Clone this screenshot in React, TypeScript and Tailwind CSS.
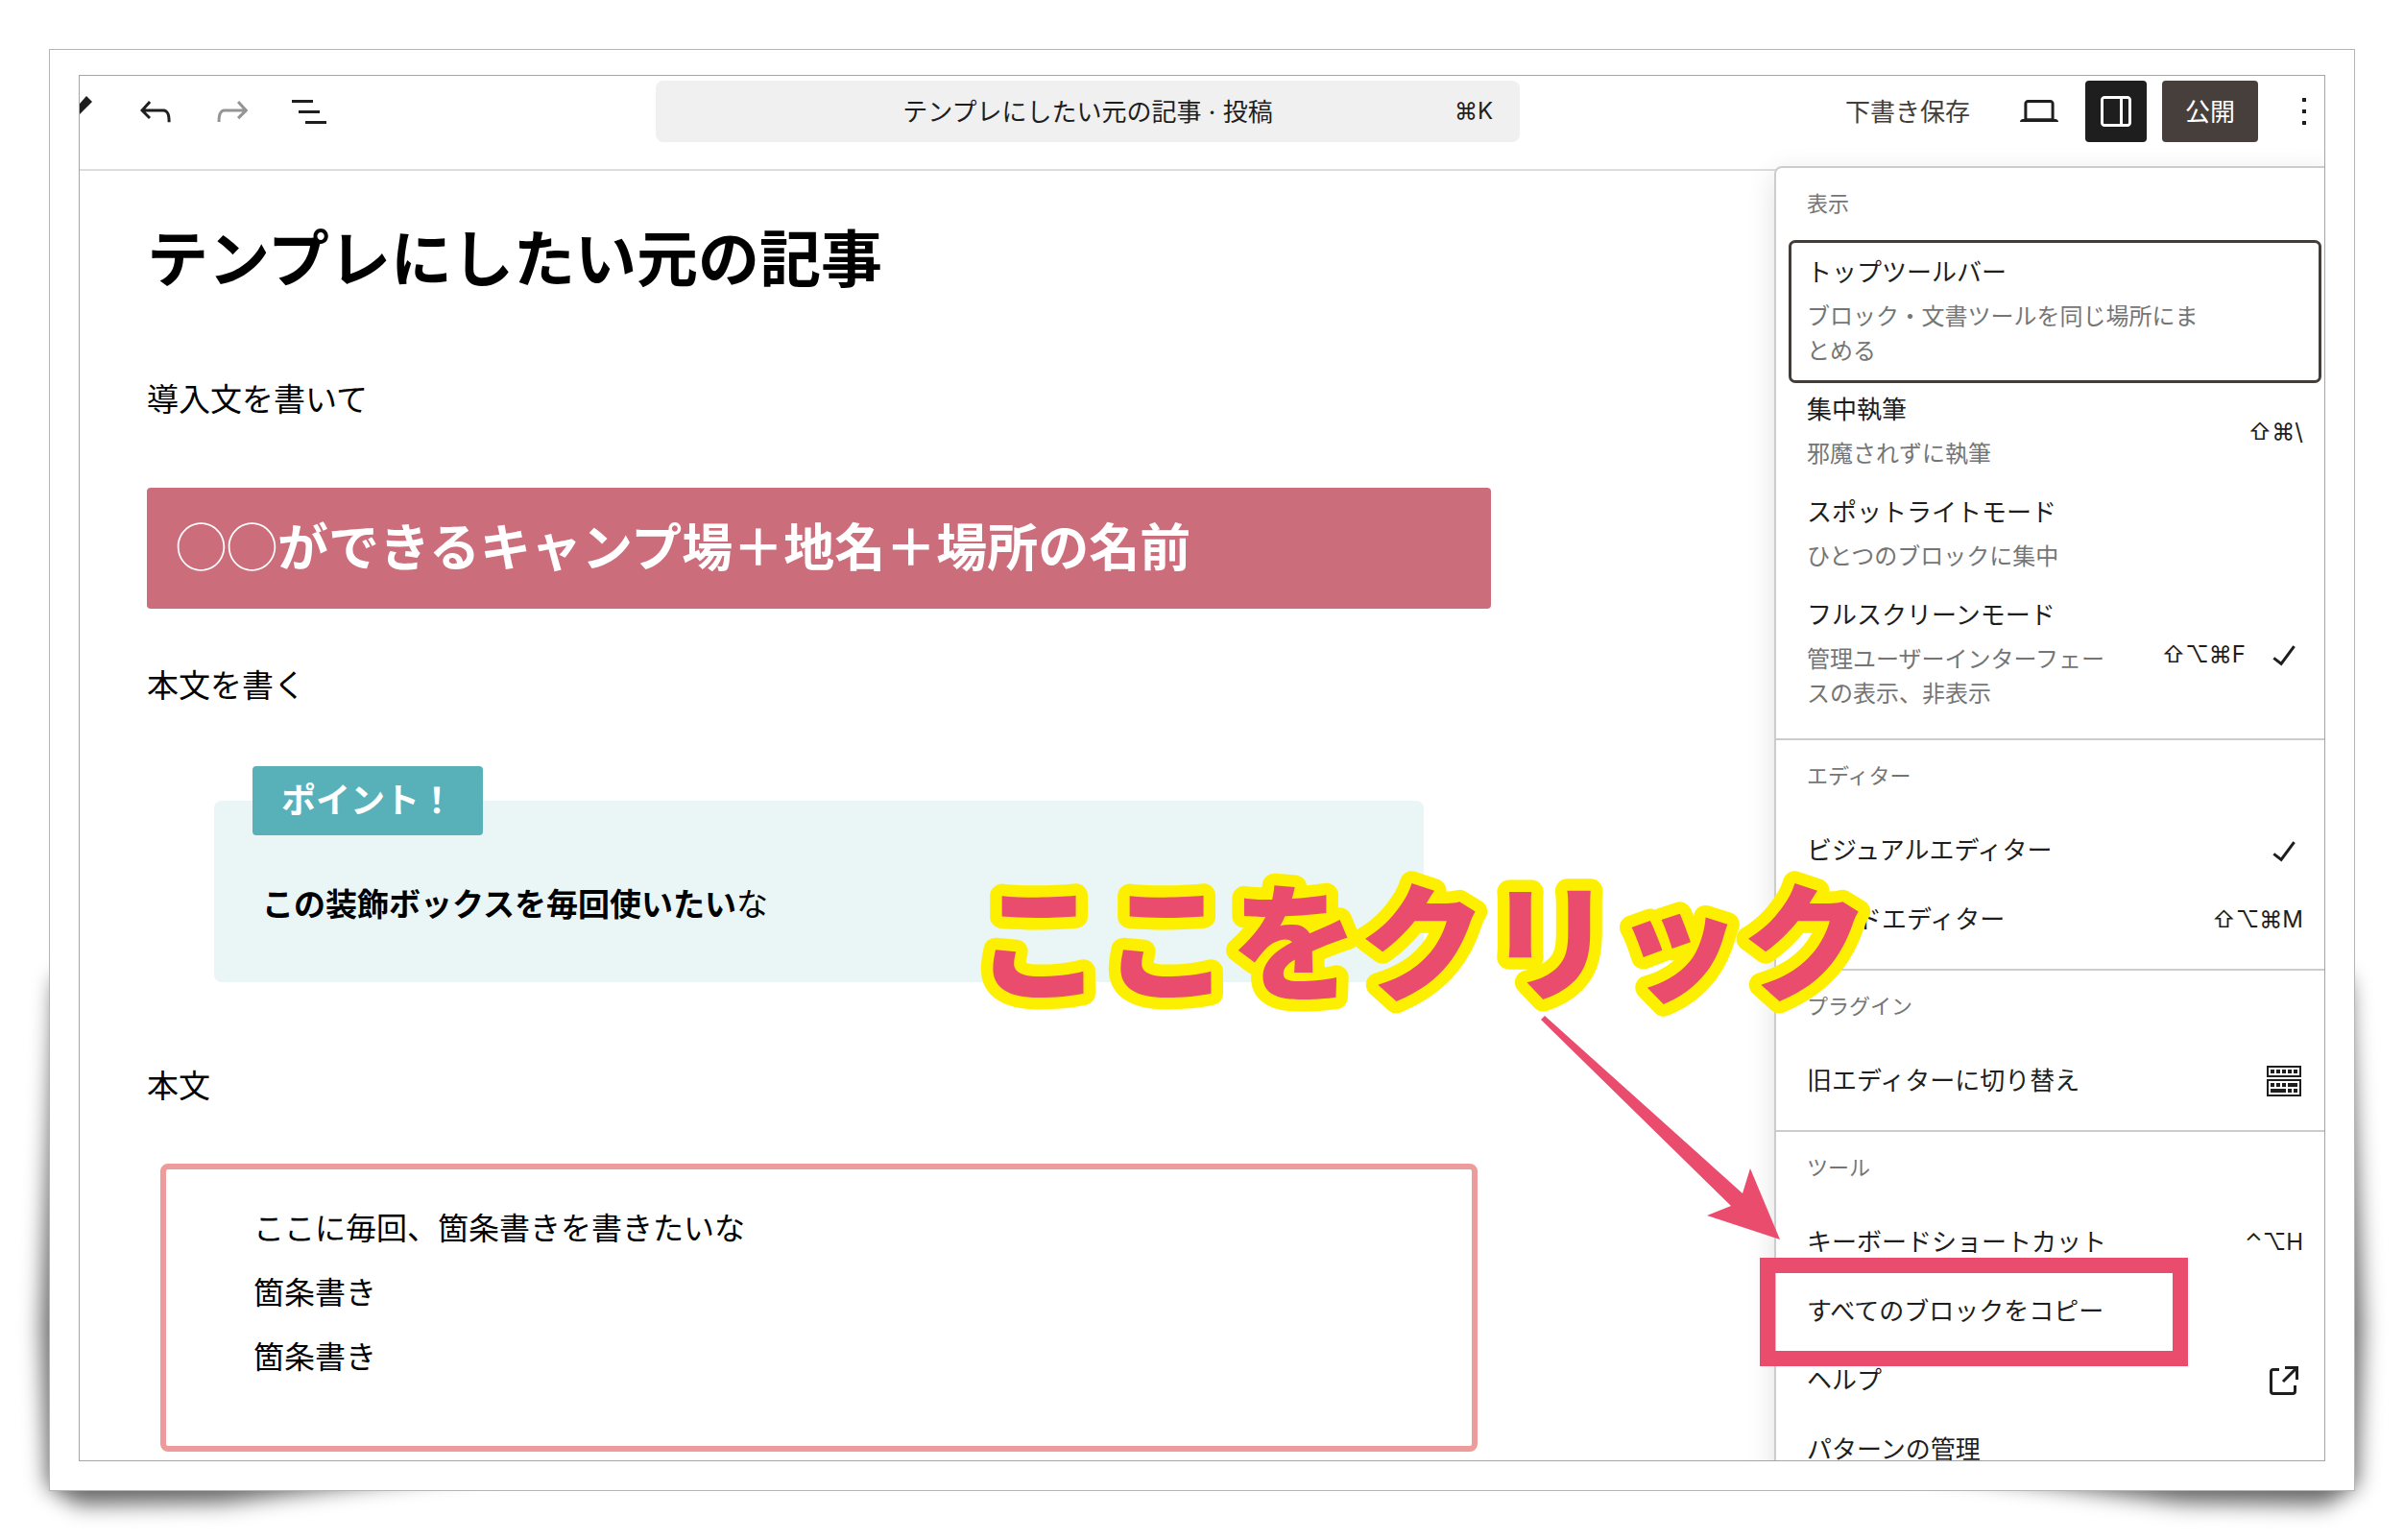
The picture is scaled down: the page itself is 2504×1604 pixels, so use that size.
import type { ReactNode } from "react";
import clsx from "clsx";

type MenuItem = {
  label: string;
  info?: string;
  shortcut?: string;
  icon?: ReactNode;
  href?: string;
  focused?: boolean;
};

type MenuGroup = {
  label: string;
  items: MenuItem[];
};

function Icon({ d, className }: { d: string; className?: string }) {
  return (
    <svg viewBox="0 0 24 24" fill="currentColor" aria-hidden="true" className={clsx("size-12 shrink-0", className)}>
      <path d={d} />
    </svg>
  );
}

const paths = {
  undo: "M18.3 11.7c-.6-.6-1.4-.9-2.3-.9H6.7l2.9-3.3-1.1-1-4.5 5L8.5 16l1-1-2.7-2.7H16c.5 0 .9.2 1.3.5 1 1 1 3.4 1 4.5v.3h1.5v-.2c0-1.5 0-4.3-1.5-5.7z",
  redo: "M15.6 6.5l-1.1 1 2.9 3.3H8c-.9 0-1.7.3-2.3.9-1.4 1.5-1.4 4.2-1.4 5.6v.2h1.5v-.3c0-1.1 0-3.5 1-4.5.3-.3.7-.5 1.3-.5h9.2L14.5 15l1.1 1.1 4.6-4.6-4.6-5z",
  listView: "M3 6h11v1.5H3V6Zm3.5 5.5h11V13h-11v-1.5ZM21 17H10v1.5h11V17Z",
  desktop:
    "M20.5 16h-.7V8c0-1.1-.9-2-2-2H6.2c-1.1 0-2 .9-2 2v8h-.7c-.8 0-1.5.7-1.5 1.5h20c0-.8-.7-1.5-1.5-1.5zM5.7 8c0-.3.2-.5.5-.5h11.6c.3 0 .5.2.5.5v7.6H5.7V8z",
  sidebar:
    "M18 4H6c-1.1 0-2 .9-2 2v12c0 1.1.9 2 2 2h12c1.1 0 2-.9 2-2V6c0-1.1-.9-2-2-2zm-4 14.5H6c-.3 0-.5-.2-.5-.5V6c0-.3.2-.5.5-.5h8v13zm4.5-.5c0 .3-.2.5-.5.5h-2.5v-13H18c.3 0 .5.2.5.5v12z",
  more: "M13 19h-2v-2h2v2zm0-6h-2v-2h2v2zm0-6h-2V5h2v2z",
  check: "M16.7 7.1l-6.3 8.5-3.3-2.5-.9 1.2 4.5 3.4L17.9 8z",
  external:
    "M19.5 4.5h-7V6h4.44l-5.97 5.97 1.06 1.06L18 7.06v4.44h1.5v-7Zm-13 1a2 2 0 0 0-2 2v10a2 2 0 0 0 2 2h10a2 2 0 0 0 2-2v-3H17v3a.5.5 0 0 1-.5.5h-10a.5.5 0 0 1-.5-.5v-10a.5.5 0 0 1 .5-.5h3V5.5h-3Z",
};

function KeyboardIcon() {
  return (
    <svg viewBox="0 0 48 48" fill="currentColor" aria-hidden="true" className="size-12 shrink-0">
      <g fill="none" stroke="currentColor" strokeWidth="2">
        <rect x="7" y="9" width="34" height="10" />
        <rect x="7" y="23" width="34" height="16" />
      </g>
      <path d="M10 12h4v4h-4zM16 12h4v4h-4zM22 12h4v4h-4zM28 12h4v4h-4zM34 12h4v4h-4z" />
      <path d="M10 26h4v4h-4zM16 26h4v4h-4zM22 26h4v4h-4zM28 26h10v4H28z" />
      <path d="M10 32h16v4H10zM28 32h4v4h-4zM34 32h4v4h-4z" />
    </svg>
  );
}

const groups: MenuGroup[] = [
  {
    label: "表示",
    items: [
      { label: "トップツールバー", info: "ブロック・文書ツールを同じ場所にまとめる", focused: true },
      { label: "集中執筆", info: "邪魔されずに執筆", shortcut: "⇧⌘\\" },
      { label: "スポットライトモード", info: "ひとつのブロックに集中" },
      {
        label: "フルスクリーンモード",
        info: "管理ユーザーインターフェースの表示、非表示",
        shortcut: "⇧⌥⌘F",
        icon: <Icon d={paths.check} />,
      },
    ],
  },
  {
    label: "エディター",
    items: [
      { label: "ビジュアルエディター", icon: <Icon d={paths.check} /> },
      { label: "コードエディター", shortcut: "⇧⌥⌘M" },
    ],
  },
  {
    label: "プラグイン",
    items: [{ label: "旧エディターに切り替え", icon: <KeyboardIcon /> }],
  },
  {
    label: "ツール",
    items: [
      { label: "キーボードショートカット", shortcut: "⌃⌥H" },
      { label: "すべてのブロックをコピー" },
      { label: "ヘルプ", icon: <Icon d={paths.external} />, href: "#help" },
      { label: "パターンの管理", href: "#patterns" },
    ],
  },
];

function MenuRow({ item }: { item: MenuItem }) {
  const className = clsx(
    "flex w-full items-center gap-4 rounded-sm px-4 text-left text-[#1e1e1e]",
    item.info ? "py-3" : "h-[72px] pt-0.5",
    item.focused && "ring-3 ring-[#433d39]"
  );
  const content = (
    <>
      <span className="flex-1">
        <span className="block text-[26px] leading-[38px]">{item.label}</span>
        {item.info && (
          <span
            className={clsx(
              "mt-[9px] block text-2xl leading-9 text-[#757575]",
              item.icon ? "max-w-[312px]" : "max-w-[416px]"
            )}
          >
            {item.info}
          </span>
        )}
      </span>
      {item.shortcut && <kbd className="font-[inherit] text-2xl">{item.shortcut}</kbd>}
      {item.icon && <span className="-mr-1">{item.icon}</span>}
    </>
  );

  return item.href ? (
    <a href={item.href} role="menuitem" className={className}>
      {content}
    </a>
  ) : (
    <button type="button" role="menuitem" className={className}>
      {content}
    </button>
  );
}

function OptionsMenu() {
  return (
    <div
      role="menu"
      className="absolute top-[94px] -right-2.5 w-[583px] rounded-lg border-2 border-[#ccc] bg-white shadow-[0_8px_30px_rgba(0,0,0,0.12)]"
    >
      {groups.map((group, i) => (
        <div
          key={group.label}
          role="group"
          aria-label={group.label}
          className={clsx("pr-3.5 pb-4 pl-4", i > 0 && "border-t-2 border-[#ccc]")}
        >
          <div className="px-4 pt-3.5 pb-[18px] text-[22px] leading-[46px] text-[#757575]">{group.label}</div>
          {group.items.map((item) => (
            <MenuRow key={item.label} item={item} />
          ))}
        </div>
      ))}
    </div>
  );
}

function Toolbar() {
  const toolButton = "flex size-16 items-center justify-center";
  return (
    <header className="flex items-start justify-between border-b-2 border-[#ddd] pt-[5px] pb-7 text-[#1e1e1e]">
      <div className="mr-3.5 flex gap-4">
        <button type="button" aria-label="ツール" className="flex h-16 w-[31px] items-center">
          <svg viewBox="0 0 13 32" fill="currentColor" className="h-8 w-[13px]">
            <path d="M7 0 13 6 0 19V8Z" />
          </svg>
        </button>
        <button type="button" aria-label="元に戻す" className={toolButton}>
          <Icon d={paths.undo} />
        </button>
        <button type="button" aria-label="やり直す" className={clsx(toolButton, "text-[#949494]")}>
          <Icon d={paths.redo} />
        </button>
        <button type="button" aria-label="ドキュメント概観" className={toolButton}>
          <Icon d={paths.listView} />
        </button>
      </div>

      <button type="button" className="flex h-16 w-[900px] items-center rounded-lg bg-[#f0f0f0] px-7">
        <span className="w-10" />
        <span className="flex-1 text-center text-[26px]">テンプレにしたい元の記事 · 投稿</span>
        <kbd className="w-10 text-right font-[inherit] text-2xl">⌘K</kbd>
      </button>

      <div className="-mr-[11px] flex gap-4">
        <button type="button" className="h-16 px-6 text-[26px] text-[#433d39]">
          下書き保存
        </button>
        <button type="button" aria-label="表示" className={toolButton}>
          <Icon d={paths.desktop} />
        </button>
        <button type="button" aria-label="設定" className={clsx(toolButton, "rounded-sm bg-[#1e1e1e] text-white")}>
          <Icon d={paths.sidebar} />
        </button>
        <button type="button" className="h-16 rounded-sm bg-[#473f3b] px-6 text-[26px] text-white">
          公開
        </button>
        <button type="button" aria-label="オプション" className={toolButton}>
          <Icon d={paths.more} />
        </button>
      </div>
    </header>
  );
}

function Article() {
  return (
    <article className="ml-[70px] max-w-[1400px] pt-11 pb-[9px] text-[33px] leading-[60px] text-black">
      <h1 className="text-[64px] leading-24 font-bold">テンプレにしたい元の記事</h1>
      <p className="mt-[68px]">導入文を書いて</p>
      <h2 className="mt-[62px] rounded-sm bg-[#cb6d7b] px-[30px] py-[15px] text-[53px] leading-24 font-bold text-white">
        <span className="font-['Noto_Sans_CJK_JP',sans-serif] leading-none font-normal">◯◯</span>
        ができるキャンプ場＋地名＋場所の名前
      </h2>
      <p className="mt-[50px]">本文を書く</p>

      <section className="relative mx-[70px] mt-[90px] rounded-lg bg-[#eaf5f5] px-[50px] pt-[78px] pb-[51px]">
        <div className="absolute -top-9 left-10 rounded-sm bg-[#58b1b9] px-[30px] text-4xl leading-[72px] font-bold text-white">
          ポイント！
        </div>
        <p>
          <strong className="font-bold">この装飾ボックスを毎回使いたい</strong>な
        </p>
      </section>

      <p className="mt-[78px]">本文</p>
      <ul className="mx-3.5 mt-[51px] rounded-lg border-6 border-[#ed9b9b] pt-7 pb-[59px] pl-[91px] text-[32px] leading-[67px]">
        <li>ここに毎回、箇条書きを書きたいな</li>
        <li>箇条書き</li>
        <li>箇条書き</li>
      </ul>
    </article>
  );
}

function Callout() {
  return (
    <div className="pointer-events-none absolute inset-0">
      <svg viewBox="0 0 960 420" fill="#ea4c6d" className="absolute top-[801px] right-[461px] h-[420px] w-[960px]">
        <path d="M605 182 609 178 815 363 823 337 854 411 778 386 803 376Z" />
        <text
          x="16"
          y="152"
          stroke="#fcf000"
          strokeWidth="25"
          strokeLinejoin="round"
          paintOrder="stroke"
          className="text-[133px] font-black"
        >
          ここをクリック
        </text>
      </svg>
      <div className="absolute top-[1231px] right-[142px] h-[113px] w-[446px] border-16 border-[#ea4c6d]" />
    </div>
  );
}

export default function App() {
  return (
    <main
      lang="ja"
      className="min-h-screen overflow-hidden bg-white p-[51px] font-[Inter,'Noto_Sans_CJK_JP',sans-serif]"
    >
      <div className="relative isolate">
        {/* Lifted corner shadows */}
        <div className="absolute -bottom-[30px] -left-5 -z-10 h-[600px] w-[480px] blur-[11px]">
          <div className="size-full bg-black/60 [clip-path:polygon(26px_40px,12px_400px,18px_564px,50px_584px,200px_582px,480px_546px,480px_300px,60px_20px)]" />
        </div>
        <div className="absolute -right-5 -bottom-[30px] -z-10 h-[600px] w-[480px] -scale-x-100 blur-[11px]">
          <div className="size-full bg-black/60 [clip-path:polygon(26px_40px,12px_400px,18px_564px,50px_584px,200px_582px,480px_546px,480px_300px,60px_20px)]" />
        </div>

        <div className="border border-[#b5b5b5] bg-white px-[30px] pt-[26px] pb-[30px]">
          <div className="relative overflow-hidden border border-[#a5a5a5]">
            <Toolbar />
            <Article />
            <OptionsMenu />
            <Callout />
          </div>
        </div>
      </div>
    </main>
  );
}
